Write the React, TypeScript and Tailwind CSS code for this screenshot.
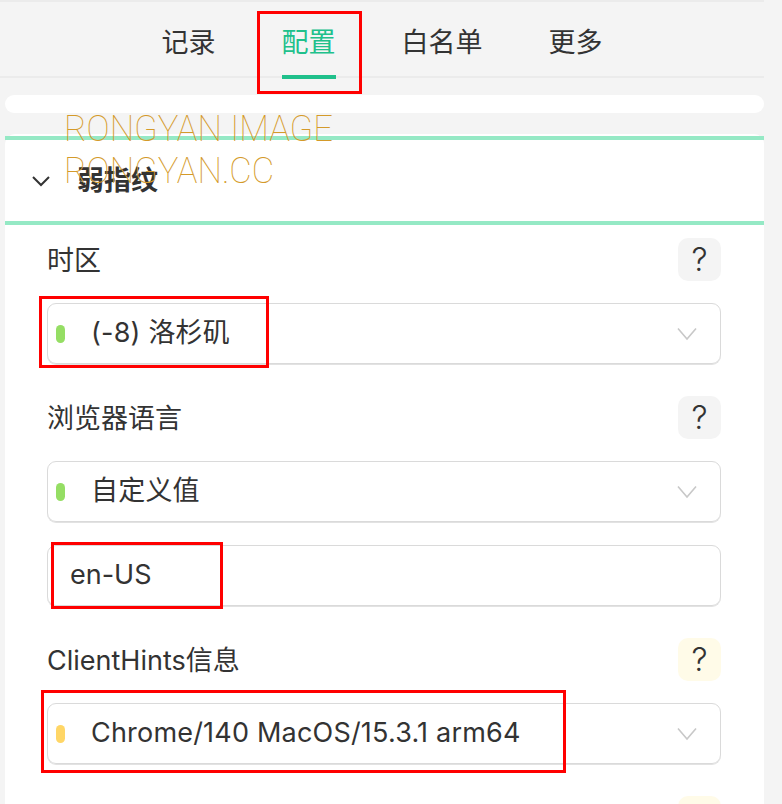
import { ReactNode } from "react";

const tabs = ["记录", "配置", "白名单", "更多"];

function Help({ tone }: { tone?: "yellow" }) {
  return (
    <div
      className={`flex h-[43px] w-[43px] items-center justify-center rounded-[10px] text-[32px] font-light leading-none text-[#333] ${
        tone === "yellow" ? "bg-[#fffbe8]" : "bg-[#f4f4f4]"
      }`}
    >
      ?
    </div>
  );
}

function Label({ text, tone }: { text: string; tone?: "yellow" }) {
  return (
    <div className="flex h-[43px] items-center justify-between">
      <span className="pt-[3px] text-[27px] text-[#333]">{text}</span>
      <Help tone={tone} />
    </div>
  );
}

function Select({ value, dot }: { value: string; dot: string }) {
  return (
    <div className="mt-[22px] flex h-[61px] items-center rounded-[9px] border-[1.5px] border-[#dadada] pl-[8px] pr-[23px] shadow-[0_1px_0_#e2e2e2]">
      <span className={`h-[18px] w-[9px] rounded-full ${dot}`} />
      <span className="ml-[26px] flex-1 text-[27px] tracking-[0.2px] text-[#333]">{value}</span>
      <svg width="20" height="14" viewBox="0 0 20 14" fill="none">
        <path d="M1 1.5 L10 12 L19 1.5" stroke="#c8c8c8" strokeWidth="1.6" />
      </svg>
    </div>
  );
}

function Field({ children }: { children: ReactNode }) {
  return <div className="mt-[32px] first:mt-0">{children}</div>;
}

export default function App() {
  return (
    <div className="relative min-h-screen w-[782px] overflow-hidden bg-[#f4f4f4] font-['Inter','Noto_Sans_CJK_SC',sans-serif]">
      <div className="w-[764px]">
        <div className="flex h-[78px] justify-center gap-[66px] border-y-2 border-[#ebebeb]">
          {tabs.map((t) => (
            <div
              key={t}
              className={`relative flex items-center pt-[8px] text-[27px] ${
                t === "配置" ? "text-[#20c08b]" : "text-[#333]"
              }`}
            >
              {t}
              {t === "配置" && (
                <span className="absolute bottom-[-3px] left-0 h-[4px] w-full bg-[#20c08b]" />
              )}
            </div>
          ))}
        </div>

        <div className="ml-[5px] mt-[17px] h-[18px] rounded-[10px] bg-white" />

        <div className="ml-[5px] mt-[21px] rounded-t-[10px] bg-white pt-[2px] pb-[40px]">
          <div className="flex h-[89px] items-center border-y-4 border-[#95e9c5] pl-[26px]">
            <svg width="20" height="14" viewBox="0 0 20 14" fill="none">
              <path d="M2 3 L10 11 L18 3" stroke="#333" strokeWidth="2" />
            </svg>
            <span className="ml-[26px] pt-[2px] text-[27px] font-bold text-[#333]">弱指纹</span>
          </div>

          <div className="pl-[42px] pr-[43px] pt-[13px]">
            <Field>
              <Label text="时区" />
              <Select value="(-8) 洛杉矶" dot="bg-[#95de64]" />
            </Field>
            <Field>
              <Label text="浏览器语言" />
              <Select value="自定义值" dot="bg-[#95de64]" />
              <div className="mt-[23px] flex h-[61px] items-center rounded-[9px] border-[1.5px] border-[#dadada] pl-[22px] shadow-[0_1px_0_#e2e2e2]">
                <span className="text-[27px] text-[#333]">en-US</span>
              </div>
            </Field>
            <Field>
              <Label text="ClientHints信息" tone="yellow" />
              <Select value="Chrome/140 MacOS/15.3.1 arm64" dot="bg-[#ffd666]" />
            </Field>
            <Field>
              <Label text="" tone="yellow" />
            </Field>
          </div>
        </div>
      </div>

      {/* watermark */}
      <div className="pointer-events-none absolute left-[64px] top-[108px] origin-left scale-x-[0.96] font-['Roboto',sans-serif] text-[36px] font-thin leading-[42px] text-[#d49a2a]">
        <div>RONGYAN IMAGE</div>
        <div>RONGYAN.CC</div>
      </div>

      {/* annotations */}
      <div className="pointer-events-none absolute left-[257px] top-[11px] h-[83px] w-[105px] border-[3px] border-[#ff0000]" />
      <div className="pointer-events-none absolute left-[39px] top-[296px] h-[72px] w-[230px] border-[3px] border-[#ff0000]" />
      <div className="pointer-events-none absolute left-[51px] top-[542px] h-[67px] w-[172px] border-[3px] border-[#ff0000]" />
      <div className="pointer-events-none absolute left-[41px] top-[690px] h-[83px] w-[525px] border-[3px] border-[#ff0000]" />
    </div>
  );
}
